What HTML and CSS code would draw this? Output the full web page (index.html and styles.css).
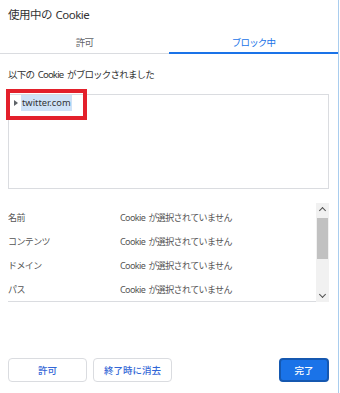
FILE: index.html
```html
<!DOCTYPE html>
<html>
<head>
    <meta name="viewport" content="width=device-width, initial-scale=1.0">
    <title>使用中の Cookie</title>
    <link rel="stylesheet" href="styles.css">
</head>
<body>
    <div class="dialog">
        <h1 class="title">使用中の Cookie</h1>
        <div class="tabs">
            <div class="tab">許可</div>
            <div class="tab active">ブロック中</div>
        </div>
        <div class="content">
            <p class="caption">以下の Cookie がブロックされました</p>
            <div class="tree">
                <div class="node">
                    <span class="arrow"></span>
                    <span class="site">twitter.com</span>
                </div>
                <div class="mark"></div>
            </div>
            <div class="details">
                <div class="rows">
                    <div class="row"><span class="key">名前</span><span class="val">Cookie が選択されていません</span></div>
                    <div class="row"><span class="key">コンテンツ</span><span class="val">Cookie が選択されていません</span></div>
                    <div class="row"><span class="key">ドメイン</span><span class="val">Cookie が選択されていません</span></div>
                    <div class="row"><span class="key">パス</span><span class="val">Cookie が選択されていません</span></div>
                </div>
                <div class="scrollbar">
                    <span class="sb-arrow up"></span>
                    <div class="thumb"></div>
                    <span class="sb-arrow down"></span>
                </div>
            </div>
        </div>
        <div class="buttons">
            <button class="btn">許可</button>
            <button class="btn">終了時に消去</button>
            <button class="btn primary">完了</button>
        </div>
    </div>
</body>
</html>
```

FILE: styles.css
```css
html, body { margin: 0; background: #fff; }
body { font-family: "Noto Sans", "Noto Sans CJK JP", sans-serif; color: #444; }
.dialog { width: 338px; height: 393px; border-right: 1px solid #a9cdee; box-sizing: content-box; }
.title { margin: 0; padding: 7px 8px 8px; font-size: 11.5px; line-height: 16px; font-weight: normal; color: #333; letter-spacing: -0.5px; word-spacing: 1px; }
.tabs { display: flex; height: 23px; }
.tab { flex: 1; display: flex; align-items: center; justify-content: center; font-size: 9.5px; color: #5f6368; border-bottom: 1px solid #dadce0; letter-spacing: -0.8px; }
.tab.active { color: #1a73e8; border-bottom: 2px solid #1a73e8; }
.content { padding: 0 9px 0 8px; }
.caption { margin: 14px 0 12px; font-size: 9.5px; line-height: 14px; color: #333; letter-spacing: -0.8px; word-spacing: 2px; }
.tree { position: relative; height: 95px; border: 1px solid #dadce0; box-sizing: border-box; }
.node { display: flex; align-items: center; height: 16px; padding-left: 5px; font-size: 9.3px; }
.arrow { width: 0; height: 0; border-left: 4px solid #5f6368; border-top: 3px solid transparent; border-bottom: 3px solid transparent; margin-right: 3px; }
.site { background: #cfe2f7; padding: 0 1px; line-height: 16px; color: #333; }
.mark { position: absolute; left: -3px; top: -6px; width: 81px; height: 31px; border: 4px solid #e3202b; box-sizing: border-box; }
.details { display: flex; margin-top: 14px; height: 99px; }
.rows { flex: 1; padding-top: 2px; border-bottom: 1px solid #dadce0; overflow: hidden; }
.row { display: flex; height: 24px; align-items: center; font-size: 9px; color: #555; letter-spacing: -0.6px; word-spacing: 1.5px; }
.key { width: 112px; }
.scrollbar { width: 13px; background: #f1f1f1; display: flex; flex-direction: column; align-items: center; }
.thumb { width: 11px; height: 41px; background: #c1c1c1; margin-top: 3px; }
.sb-arrow { width: 4px; height: 4px; border-left: 1px solid #505050; border-top: 1px solid #505050; margin: 5px 0 2px; transform: rotate(45deg); }
.sb-arrow.down { margin: auto 0 5px; transform: rotate(225deg); }
.buttons { display: flex; gap: 6px; padding: 0 9px 0 8px; margin-top: 56px; }
.btn { height: 24px; width: 79px; border: 1px solid #dadce0; border-radius: 4px; background: #fff; color: #3367d6; font-family: inherit; font-size: 9.5px; font-weight: 500; padding: 0; }
.btn.primary { margin-left: auto; width: 50px; background: #1a73e8; color: #fff; border: 2px solid #1558b0; }
```
